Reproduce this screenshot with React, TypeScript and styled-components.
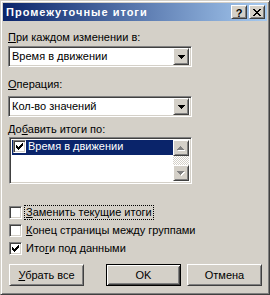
import React from 'react';
import styled, { createGlobalStyle, css } from 'styled-components';

const Global = createGlobalStyle`
  html, body { margin: 0; padding: 0; background: #D4D0C8; }
  body { font-family: "Liberation Sans", Arial, sans-serif; font-size: 11px; color: #000; }
  * { box-sizing: border-box; }
`;

const raised = css`
  border: 1px solid;
  border-color: #fff #404040 #404040 #fff;
  box-shadow: inset 1px 1px 0 #D4D0C8, inset -1px -1px 0 #808080;
`;

const sunken = css`
  border: 1px solid;
  border-color: #808080 #fff #fff #808080;
  box-shadow: inset 1px 1px 0 #404040, inset -1px -1px 0 #D4D0C8;
`;

const Window = styled.div`
  width: 270px;
  height: 295px;
  border: 1px solid;
  border-color: #D4D0C8 #404040 #404040 #D4D0C8;
  box-shadow: inset 1px 1px 0 #fff, inset -1px -1px 0 #808080;
  padding: 2px;
  display: flex;
  flex-direction: column;
  background: #D4D0C8;
`;

const TitleBar = styled.div`
  height: 18px;
  flex: none;
  display: flex;
  align-items: center;
  padding: 0 2px 0 3px;
  background: linear-gradient(to right, #0A246A, #A6CAF0);
`;

const TitleText = styled.div`
  flex: 1;
  color: #fff;
  font-weight: bold;
  font-size: 11px;
  line-height: 13px;
  letter-spacing: 1px;
  white-space: nowrap;
`;

const CaptionButtons = styled.div`
  display: flex;
  gap: 2px;
`;

const CaptionButton = styled.div`
  ${raised};
  width: 16px;
  height: 14px;
  background: #D4D0C8;
  display: flex;
  align-items: center;
  justify-content: center;
  font-weight: bold;
  font-size: 11px;
  line-height: 12px;
  padding-top: 1px;
`;

const Body = styled.div`
  flex: 1;
  display: flex;
  flex-direction: column;
  align-items: flex-start;
  padding: 10px 5px 0 5px;
`;

const Label = styled.div<{ $mt?: number }>`
  height: 13px;
  line-height: 13px;
  white-space: nowrap;
  margin-top: ${p => p.$mt ?? 0}px;
`;

const U = styled.span`
  text-decoration: underline;
  text-underline-offset: 1px;
`;

const Combo = styled.div<{ $mt?: number }>`
  ${sunken};
  margin-top: ${p => p.$mt ?? 0}px;
  width: 184px;
  height: 21px;
  background: #fff;
  display: flex;
  align-items: center;
  padding: 2px;
`;

const ComboText = styled.div`
  flex: 1;
  padding-left: 1px;
  line-height: 13px;
  white-space: nowrap;
`;

const ArrowButton = styled.div<{ $h?: number }>`
  ${raised};
  width: 16px;
  height: ${p => p.$h ?? 17}px;
  flex: none;
  background: #D4D0C8;
  display: flex;
  align-items: center;
  justify-content: center;
`;

const ListBox = styled.div<{ $mt?: number }>`
  ${sunken};
  margin-top: ${p => p.$mt ?? 0}px;
  margin-left: 1px;
  width: 183px;
  height: 47px;
  background: #fff;
  display: flex;
  padding: 2px;
`;

const ListItems = styled.div`
  flex: 1;
  display: flex;
  flex-direction: column;
`;

const ListRow = styled.div<{ $selected?: boolean }>`
  height: 15px;
  display: flex;
  align-items: flex-start;
  gap: 2px;
  padding-left: 1px;
  background: ${p => (p.$selected ? '#0A246A' : 'transparent')};
  color: ${p => (p.$selected ? '#fff' : '#000')};
`;

const ListText = styled.div`
  line-height: 13px;
  white-space: nowrap;
`;

const ScrollBar = styled.div`
  width: 16px;
  display: flex;
  flex-direction: column;
`;

const Track = styled.div`
  flex: 1;
  background: repeating-conic-gradient(#D4D0C8 0 25%, #fff 0 50%) 0 0 / 2px 2px;
`;

const CheckBox = styled.div`
  ${sunken};
  width: 13px;
  height: 13px;
  flex: none;
  background: #fff;
  padding: 1px;
  display: flex;
`;

const Options = styled.div`
  margin-top: 22px;
  margin-left: 1px;
  display: flex;
  flex-direction: column;
  gap: 5px;
`;

const OptionRow = styled.div`
  height: 13px;
  display: flex;
  align-items: center;
  gap: 2px;
`;

const OptionLabel = styled.div<{ $focused?: boolean }>`
  border: 1px dotted ${p => (p.$focused ? '#000' : 'transparent')};
  padding: 0 1px;
  line-height: 13px;
  white-space: nowrap;
`;

const ButtonRow = styled.div`
  margin-top: 9px;
  margin-left: 1px;
  display: flex;
`;

const Button = styled.div<{ $ml?: number; $default?: boolean }>`
  margin-left: ${p => p.$ml ?? 0}px;
  width: 75px;
  height: 22px;
  background: #D4D0C8;
  display: flex;
  align-items: center;
  justify-content: center;
  white-space: nowrap;
  ${p =>
    p.$default
      ? css`
          border: 1px solid #000;
          box-shadow: inset 1px 1px 0 #fff, inset -1px -1px 0 #404040, inset 2px 2px 0 #D4D0C8, inset -2px -2px 0 #808080;
        `
      : raised};
`;

const Pixels: React.FC<{ rows: string[]; color: string; shadow?: string }> = ({ rows, color, shadow }) => {
  const w = rows[0].length + (shadow ? 1 : 0);
  const h = rows.length + (shadow ? 1 : 0);
  const rects: React.ReactNode[] = [];
  if (shadow) {
    rows.forEach((r, y) =>
      r.split('').forEach((c, x) => {
        if (c === '#') rects.push(<rect key={`s${x}-${y}`} x={x + 1} y={y + 1} width={1} height={1} fill={shadow} />);
      })
    );
  }
  rows.forEach((r, y) =>
    r.split('').forEach((c, x) => {
      if (c === '#') rects.push(<rect key={`p${x}-${y}`} x={x} y={y} width={1} height={1} fill={color} />);
    })
  );
  return (
    <svg width={w} height={h} viewBox={`0 0 ${w} ${h}`} shapeRendering="crispEdges" style={{ display: 'block' }}>
      {rects}
    </svg>
  );
};

const DOWN = ['#######', '.#####.', '..###..', '...#...'];
const UP = ['...#...', '..###..', '.#####.', '#######'];
const CLOSE = ['##....##', '.##..##.', '..####..', '...##...', '..####..', '.##..##.', '##....##'];
const CHECK = ['......#', '.....##', '#...###', '##.###.', '#####..', '.###...', '..#....'];

const CheckMark = styled.div`
  margin: 1px 0 0 1px;
`;

const Check: React.FC<{ on?: boolean }> = ({ on }) => (
  <CheckBox>
    {on && (
      <CheckMark>
        <Pixels rows={CHECK} color="#000" />
      </CheckMark>
    )}
  </CheckBox>
);

export default function App() {
  return (
    <>
      <Global />
      <Window>
        <TitleBar>
          <TitleText>Промежуточные итоги</TitleText>
          <CaptionButtons>
            <CaptionButton>?</CaptionButton>
            <CaptionButton>
              <Pixels rows={CLOSE} color="#000" />
            </CaptionButton>
          </CaptionButtons>
        </TitleBar>
        <Body>
          <Label>
            <U>П</U>ри каждом изменении в:
          </Label>
          <Combo $mt={2}>
            <ComboText>Время в движении</ComboText>
            <ArrowButton>
              <Pixels rows={DOWN} color="#000" />
            </ArrowButton>
          </Combo>
          <Label $mt={11}>
            <U>О</U>перация:
          </Label>
          <Combo $mt={5}>
            <ComboText>Кол-во значений</ComboText>
            <ArrowButton>
              <Pixels rows={DOWN} color="#000" />
            </ArrowButton>
          </Combo>
          <Label $mt={6}>
            До<U>б</U>авить итоги по:
          </Label>
          <ListBox $mt={1}>
            <ListItems>
              <ListRow $selected>
                <Check on />
                <ListText>Время в движении</ListText>
              </ListRow>
            </ListItems>
            <ScrollBar>
              <ArrowButton $h={16}>
                <Pixels rows={UP} color="#808080" shadow="#fff" />
              </ArrowButton>
              <Track />
              <ArrowButton $h={16}>
                <Pixels rows={DOWN} color="#808080" shadow="#fff" />
              </ArrowButton>
            </ScrollBar>
          </ListBox>
          <Options>
            <OptionRow>
              <Check />
              <OptionLabel $focused>
                <U>З</U>аменить текущие итоги
              </OptionLabel>
            </OptionRow>
            <OptionRow>
              <Check />
              <OptionLabel>
                <U>К</U>онец страницы между группами
              </OptionLabel>
            </OptionRow>
            <OptionRow>
              <Check on />
              <OptionLabel>
                Ито<U>г</U>и под данными
              </OptionLabel>
            </OptionRow>
          </Options>
          <ButtonRow>
            <Button>
              <span>
                <U>У</U>брать все
              </span>
            </Button>
            <Button $ml={22} $default>
              OK
            </Button>
            <Button $ml={6}>Отмена</Button>
          </ButtonRow>
        </Body>
      </Window>
    </>
  );
}
